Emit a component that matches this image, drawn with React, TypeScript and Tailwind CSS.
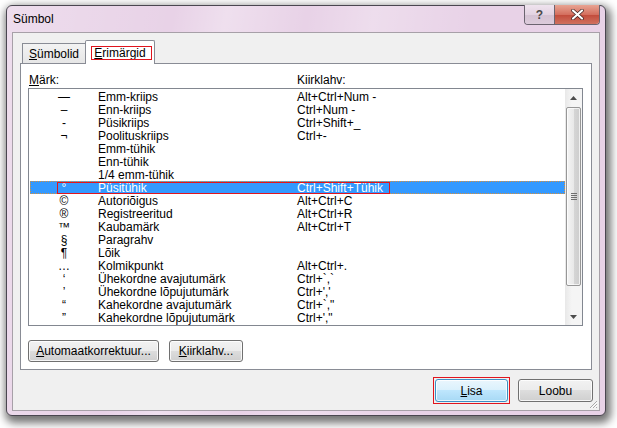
const font = { fontFamily: '"Liberation Sans", Arial, sans-serif' };

type Row = { sym: string; name: string; keys: string };

const rows: Row[] = [
  { sym: '—', name: 'Emm-kriips', keys: 'Alt+Ctrl+Num -' },
  { sym: '–', name: 'Enn-kriips', keys: 'Ctrl+Num -' },
  { sym: '-', name: 'Püsikriips', keys: 'Ctrl+Shift+_' },
  { sym: '¬', name: 'Poolituskriips', keys: 'Ctrl+-' },
  { sym: '', name: 'Emm-tühik', keys: '' },
  { sym: '', name: 'Enn-tühik', keys: '' },
  { sym: '', name: '1/4 emm-tühik', keys: '' },
  { sym: '°', name: 'Püsitühik', keys: 'Ctrl+Shift+Tühik' },
  { sym: '©', name: 'Autoriõigus', keys: 'Alt+Ctrl+C' },
  { sym: '®', name: 'Registreeritud', keys: 'Alt+Ctrl+R' },
  { sym: '™', name: 'Kaubamärk', keys: 'Alt+Ctrl+T' },
  { sym: '§', name: 'Paragrahv', keys: '' },
  { sym: '¶', name: 'Lõik', keys: '' },
  { sym: '…', name: 'Kolmikpunkt', keys: 'Alt+Ctrl+.' },
  { sym: '‘', name: 'Ühekordne avajutumärk', keys: 'Ctrl+`,`' },
  { sym: '’', name: 'Ühekordne lõpujutumärk', keys: "Ctrl+','" },
  { sym: '“', name: 'Kahekordne avajutumärk', keys: 'Ctrl+`,"' },
  { sym: '”', name: 'Kahekordne lõpujutumärk', keys: "Ctrl+'," + '"' },
];

const SELECTED = 7;

function Button({ children, className, primary }: { children: React.ReactNode; className: string; primary?: boolean }) {
  return (
    <div
      className={
        'flex h-[22px] items-center justify-center rounded-[3px] border text-[12px] text-black shadow-[inset_0_0_0_1px_rgba(255,255,255,0.8)] ' +
        (primary
          ? 'border-[#3c8fc4] bg-[linear-gradient(#eaf6fd_0%,#d9f0fc_50%,#bee6fd_50%,#a7d9f5_100%)] '
          : 'border-[#707070] bg-[linear-gradient(#f2f2f2_0%,#ebebeb_50%,#dddddd_50%,#cfcfcf_100%)] ') +
        className
      }
    >
      {children}
    </div>
  );
}

function ScrollBar() {
  return (
    <div className="flex h-full w-[17px] flex-col bg-[linear-gradient(90deg,#e8e8e8,#f5f5f5_40%,#f5f5f5)]">
      <div className="flex h-[18px] items-center justify-center">
        <svg width="7" height="4" viewBox="0 0 7 4">
          <path d="M0 4 L3.5 0 L7 4 Z" fill="#4d4d4d" />
        </svg>
      </div>
      <div className="mx-[1px] flex h-[179px] items-center justify-center rounded-[2px] border border-[#979797] bg-[linear-gradient(90deg,#f4f4f4,#e9e9e9_50%,#d6d6d6_51%,#cdcdcd)] shadow-[inset_0_0_0_1px_rgba(255,255,255,0.7)]">
        <div className="flex flex-col gap-[1px]">
          <div className="h-px w-[6px] bg-[#6f6f6f]" />
          <div className="h-px w-[6px] bg-[#6f6f6f]" />
          <div className="h-px w-[6px] bg-[#6f6f6f]" />
          <div className="h-px w-[6px] bg-[#6f6f6f]" />
        </div>
      </div>
      <div className="flex-1" />
      <div className="flex h-[17px] items-center justify-center">
        <svg width="7" height="4" viewBox="0 0 7 4">
          <path d="M0 0 L3.5 4 L7 0 Z" fill="#4d4d4d" />
        </svg>
      </div>
    </div>
  );
}

export default function App() {
  return (
    <div className="h-[428px] w-[617px] overflow-hidden bg-white pl-[6px] pt-[5px]" style={font}>
      {/* window frame */}
      <div className="relative flex h-[411px] w-[600px] flex-col rounded-[6px] border border-[#4a4650] bg-[#e8d2e7] px-[5px] pb-[4px] shadow-[2px_4px_9px_3px_rgba(0,0,0,0.55)]">
        <div className="pointer-events-none absolute inset-0 rounded-[5px] bg-[linear-gradient(100deg,rgba(255,255,255,0.25)_0%,rgba(255,255,255,0)_25%,rgba(255,255,255,0.3)_33%,rgba(255,255,255,0)_45%,rgba(255,255,255,0.25)_55%,rgba(255,255,255,0)_70%)]" />
        <div className="relative flex h-[26px] items-center pl-[1px] text-[12px] text-black">Sümbol</div>

        {/* caption buttons */}
        <div className="absolute right-[5px] top-[-1px] flex h-[20px] overflow-hidden rounded-b-[4px] border border-t-0 border-[#6b6470]">
          <div className="flex w-[29px] items-center justify-center bg-[linear-gradient(#efe3ee_0%,#e3d3e2_50%,#d4c2d3_51%,#dccbdb_100%)] text-[12px] font-bold text-[#4a4a4a]">
            ?
          </div>
          <div className="flex w-[45px] items-center justify-center border-l border-[#6b6470] bg-[linear-gradient(#e8a493_0%,#d46f5f_50%,#c24a3a_51%,#d0715f_100%)]">
            <svg width="13" height="11" viewBox="0 0 13 11">
              <path d="M2 1.5 L11 9.5 M11 1.5 L2 9.5" stroke="#3c2020" strokeWidth="3.6" strokeLinecap="round" />
              <path d="M2 1.5 L11 9.5 M11 1.5 L2 9.5" stroke="#ffffff" strokeWidth="2.2" strokeLinecap="round" />
            </svg>
          </div>
        </div>

        {/* client area */}
        <div className="relative flex flex-1 flex-col border border-[#a7a0a8] bg-[#f0f0f0] pt-[7px]">
          {/* tab strip */}
          <div className="ml-[7px] flex h-[23px] items-end">
            <div className="ml-[2px] flex h-[20px] w-[63px] items-center justify-center border border-b-0 border-r-0 border-[#898c95] bg-[linear-gradient(#f3f3f3,#e6e6e6)] pt-[1px] text-[12px] text-black">
              <span>
                <u className="underline-offset-1">S</u>ümbolid
              </span>
            </div>
            <div className="relative z-10 mb-[-1px] flex h-[24px] w-[70px] items-center justify-center rounded-t-[2px] border border-b-0 border-[#898c95] bg-white text-[12px] text-black">
              <span>
                <u className="underline-offset-1">E</u>rimärgid
              </span>
              <div className="absolute left-[5px] top-[5px] h-[14px] w-[61px] border border-[#e0141e]" />
            </div>
          </div>

          {/* tab panel */}
          <div className="ml-[7px] flex h-[307px] w-[572px] flex-col border border-[#898c95] bg-white px-[7px]">
            <div className="mt-[8px] flex h-[14px] items-center pt-[1px] text-[12px] text-black">
              <div className="w-[269px] pl-[1px]">
                <u className="underline-offset-1">M</u>ärk:
              </div>
              <div>Kiirklahv:</div>
            </div>

            {/* list box */}
            <div className="mt-[2px] flex h-[238px] w-[555px] border border-[#828790] bg-white">
              <div className="flex-1 pl-[1px] pt-[1px] text-[12px] leading-[13px] text-black">
                {rows.map((r, i) => {
                  const sel = i === SELECTED;
                  return (
                    <div
                      key={r.name}
                      className={
                        'relative flex h-[13px] items-center pt-[2px] ' +
                        (sel ? 'bg-[#3399ff] text-white outline outline-1 -outline-offset-1 outline-dotted outline-[#d9903a]' : '')
                      }
                    >
                      <div className="w-[68px] text-center">{r.sym}</div>
                      <div className="w-[199px]">{r.name}</div>
                      <div>{r.keys}</div>
                      {sel && <div className="absolute left-[27px] top-[1px] h-[12px] w-[333px] border border-[#e0141e]" />}
                    </div>
                  );
                })}
              </div>
              <ScrollBar />
            </div>

            <div className="mt-[14px] flex gap-[10px]">
              <Button className="w-[131px]">
                <span>
                  <u className="underline-offset-1">A</u>utomaatkorrektuur...
                </span>
              </Button>
              <Button className="w-[74px]">
                <span>
                  <u className="underline-offset-1">K</u>iirklahv...
                </span>
              </Button>
            </div>
          </div>

          {/* dialog buttons */}
          <div className="mt-[9px] flex justify-end gap-[10px] pr-[6px]">
            <div className="relative">
              <Button primary className="h-[23px] w-[73px]">
                <span>
                  <u className="underline-offset-1">L</u>isa
                </span>
              </Button>
              <div className="absolute -inset-[2px] border border-[#e0141e]" />
            </div>
            <Button className="h-[23px] w-[75px]">Loobu</Button>
          </div>

          {/* size grip */}
          <svg className="absolute bottom-[1px] right-[1px]" width="10" height="10" viewBox="0 0 10 10">
            <path d="M9 2 L2 9 M9 5 L5 9 M9 8 L8 9" stroke="#a8a8a8" strokeWidth="1" />
            <path d="M9.5 3 L3 9.5 M9.5 6 L6 9.5" stroke="#ffffff" strokeWidth="1" />
          </svg>
        </div>
      </div>
    </div>
  );
}
